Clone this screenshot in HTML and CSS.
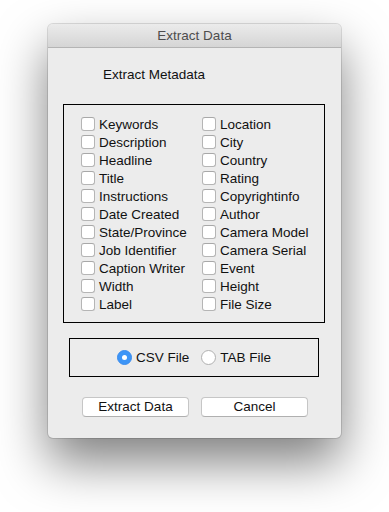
FILE: index.html
```html
<!DOCTYPE html>
<html>
<head>
<meta charset="utf-8">
<link rel="stylesheet" href="styles.css">
</head>
<body>
<div class="stage">
  <div class="window">
    <div class="titlebar">Extract Data</div>
    <div class="content">
      <div class="heading">Extract Metadata</div>
      <div class="fieldbox">
        <div class="grid">
          <label class="item"><span class="cb"></span>Keywords</label>
          <label class="item"><span class="cb"></span>Location</label>
          <label class="item"><span class="cb"></span>Description</label>
          <label class="item"><span class="cb"></span>City</label>
          <label class="item"><span class="cb"></span>Headline</label>
          <label class="item"><span class="cb"></span>Country</label>
          <label class="item"><span class="cb"></span>Title</label>
          <label class="item"><span class="cb"></span>Rating</label>
          <label class="item"><span class="cb"></span>Instructions</label>
          <label class="item"><span class="cb"></span>Copyrightinfo</label>
          <label class="item"><span class="cb"></span>Date Created</label>
          <label class="item"><span class="cb"></span>Author</label>
          <label class="item"><span class="cb"></span>State/Province</label>
          <label class="item"><span class="cb"></span>Camera Model</label>
          <label class="item"><span class="cb"></span>Job Identifier</label>
          <label class="item"><span class="cb"></span>Camera Serial</label>
          <label class="item"><span class="cb"></span>Caption Writer</label>
          <label class="item"><span class="cb"></span>Event</label>
          <label class="item"><span class="cb"></span>Width</label>
          <label class="item"><span class="cb"></span>Height</label>
          <label class="item"><span class="cb"></span>Label</label>
          <label class="item"><span class="cb"></span>File Size</label>
        </div>
      </div>
      <div class="radiobox">
        <label class="radio"><span class="rb on"></span>CSV File</label>
        <label class="radio"><span class="rb"></span>TAB File</label>
      </div>
      <div class="buttons">
        <button class="btn">Extract Data</button>
        <button class="btn">Cancel</button>
      </div>
    </div>
  </div>
</div>
</body>
</html>
```

FILE: styles.css
```css
html, body {
  margin: 0;
  padding: 0;
  background: #ffffff;
}
body {
  font-family: "Liberation Sans", Arial, sans-serif;
  font-size: 13.5px;
  color: #111;
}
.stage {
  height: 512px;
  box-sizing: border-box;
  padding: 24px 0 0 48px;
}
.window {
  width: 293px;
  height: 414px;
  background: #ececec;
  border-radius: 5px;
  box-shadow: 0 0 0 1px rgba(0,0,0,0.12), 0 24px 50px rgba(0,0,0,0.5);
  overflow: hidden;
}
.titlebar {
  height: 23px;
  line-height: 23px;
  text-align: center;
  color: #4d4d4d;
  background: linear-gradient(#ebebeb, #d5d5d5);
  border-bottom: 1px solid #b4b4b4;
}
.content {
  display: flex;
  flex-direction: column;
  padding: 19px 0 0 0;
}
.heading {
  line-height: 16px;
  margin-left: 55px;
  color: #111;
}
.fieldbox {
  margin: 21px 0 0 15px;
  width: 260px;
  height: 217px;
  border: 1px solid #000;
  box-sizing: content-box;
}
.grid {
  display: grid;
  grid-template-columns: 121px auto;
  padding: 10px 0 0 17px;
}
.item {
  display: flex;
  align-items: center;
  height: 18px;
  gap: 4px;
}
.cb {
  width: 12px;
  height: 12px;
  background: #fff;
  border: 1px solid #b5b5b5;
  border-top-color: #a8a8a8;
  border-radius: 3px;
  flex: none;
}
.radiobox {
  margin: 15px 0 0 21px;
  width: 248px;
  height: 37px;
  border: 1px solid #000;
  display: flex;
  align-items: center;
  justify-content: center;
  gap: 12px;
}
.radio {
  display: flex;
  align-items: center;
  gap: 4px;
}
.rb {
  width: 13px;
  height: 13px;
  border: 1px solid #b0b0b0;
  border-radius: 50%;
  background: #fff;
  flex: none;
  position: relative;
}
.rb.on {
  background: #3d95f7;
  border-color: #3a8cee;
}
.rb.on::after {
  content: "";
  position: absolute;
  left: 4px;
  top: 4px;
  width: 5px;
  height: 5px;
  border-radius: 50%;
  background: #fff;
}
.buttons {
  display: flex;
  gap: 12px;
  margin: 20px 0 0 34px;
}
.btn {
  font-family: "Liberation Sans", Arial, sans-serif;
  font-size: 13.5px;
  color: #111;
  width: 107px;
  height: 20px;
  padding: 0;
  background: #fff;
  border: 1px solid #c6c6c6;
  border-bottom-color: #b0b0b0;
  border-radius: 4px;
  line-height: 18px;
}
```
